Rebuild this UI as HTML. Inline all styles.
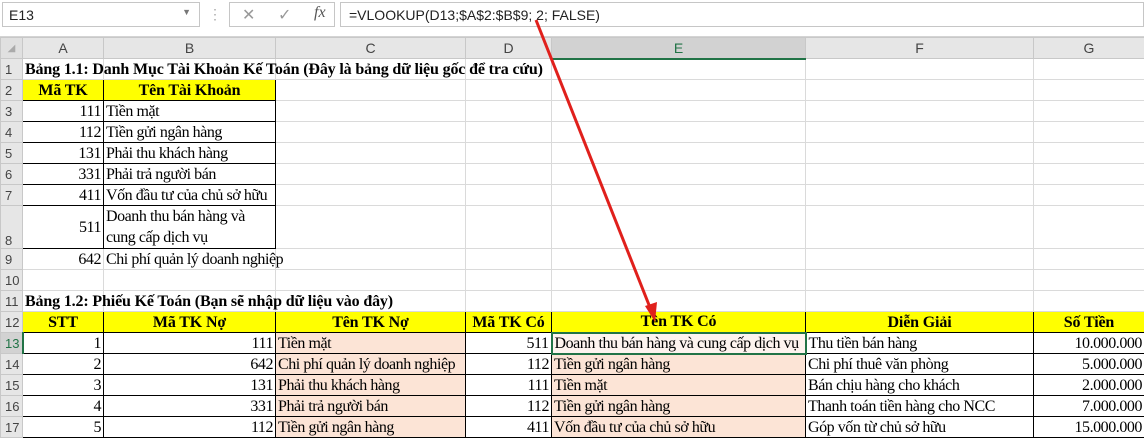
<!DOCTYPE html>
<html><head><meta charset="utf-8"><style>
*{margin:0;padding:0;box-sizing:border-box}
body{width:1144px;height:436px;overflow:hidden;background:#fff;position:relative;font-family:"Liberation Serif",serif}
.fb{position:absolute;left:0;top:0;width:1144px;height:37px;background:#fff;border-bottom:1px solid #d4d4d4}
.nb{position:absolute;left:2px;top:2px;width:198px;height:25px;background:#fff;border:1px solid #c6c6c6;font:14px "Liberation Sans",sans-serif;color:#222;padding:4px 6px}
.nb span{position:absolute;right:8px;top:4px;font-size:9px;color:#777}
.dots{position:absolute;left:208px;top:6px;color:#aaa;font:14px "Liberation Sans",sans-serif}
.ic{position:absolute;left:229px;top:2px;width:106px;height:25px;background:#fff;border:1px solid #c6c6c6;font:16px "Liberation Sans",sans-serif;color:#999}
.fx{position:absolute;left:340px;top:2px;width:804px;height:25px;background:#fff;border:1px solid #c6c6c6;font:14px "Liberation Sans",sans-serif;color:#222;padding:4px 8px}
table{position:absolute;left:0;top:37px;width:1144px;border-collapse:collapse;table-layout:fixed}
td{border:1px solid #dadada;height:21px;font-size:16px;letter-spacing:-0.45px;white-space:nowrap;overflow:visible;padding:0 2px;line-height:19px;color:#000}
td.h{background:#e6e6e6;font:14px "Liberation Sans",sans-serif;letter-spacing:0;color:#444;text-align:center;border-color:#c8c8c8}
td.rh{text-align:left;padding-left:4px;font-size:13px}
td.sel{background:#d2d2d2;color:#217346}
td.b{border:1px solid #000}
.y{background:#ffff00;font-weight:bold;text-align:center;letter-spacing:-0.15px}
.r{text-align:right}
.p{background:#fce4d6}
.t{font-weight:bold;letter-spacing:-0.15px}
</style></head><body>
<div class="fb">
<div class="nb">E13<span>▼</span></div>
<div class="dots">⋮</div>
<div class="ic"><span style="position:absolute;left:12px;top:2px">✕</span><span style="position:absolute;left:48px;top:2px">✓</span><span style="position:absolute;left:84px;top:1px;font-family:'Liberation Serif';font-style:italic;color:#555">fx</span></div>
<div class="fx">=VLOOKUP(D13;$A$2:$B$9; 2; FALSE)</div>
</div>
<table>
<colgroup><col style="width:22px"><col style="width:81px"><col style="width:172px"><col style="width:190px"><col style="width:86px"><col style="width:254px"><col style="width:228px"><col style="width:111px"></colgroup>
<tr><td class="h" style="background:#e0e0e0;font-size:10px;color:#aaa">◢</td><td class="h">A</td><td class="h">B</td><td class="h">C</td><td class="h">D</td><td class="h sel" style="border-bottom:2px solid #217346">E</td><td class="h">F</td><td class="h">G</td></tr>
<tr><td class="h rh">1</td><td class="t">Bảng 1.1: Danh Mục Tài Khoản Kế Toán (Đây là bảng dữ liệu gốc để tra cứu)</td><td style="border-left-color:transparent"></td><td style="border-left-color:transparent"></td><td style="border-left-color:transparent"></td><td></td><td></td><td></td></tr>
<tr><td class="h rh">2</td><td class="b y">Mã TK</td><td class="b y">Tên Tài Khoản</td><td></td><td></td><td></td><td></td><td></td></tr>
<tr><td class="h rh">3</td><td class="b r">111</td><td class="b">Tiền mặt</td><td></td><td></td><td></td><td></td><td></td></tr>
<tr><td class="h rh">4</td><td class="b r">112</td><td class="b">Tiền gửi ngân hàng</td><td></td><td></td><td></td><td></td><td></td></tr>
<tr><td class="h rh">5</td><td class="b r">131</td><td class="b">Phải thu khách hàng</td><td></td><td></td><td></td><td></td><td></td></tr>
<tr><td class="h rh">6</td><td class="b r">331</td><td class="b">Phải trả người bán</td><td></td><td></td><td></td><td></td><td></td></tr>
<tr><td class="h rh">7</td><td class="b r">411</td><td class="b">Vốn đầu tư của chủ sở hữu</td><td></td><td></td><td></td><td></td><td></td></tr>
<tr style="height:42px"><td class="h rh" style="vertical-align:bottom">8</td><td class="b r">511</td><td class="b" style="white-space:normal;line-height:21px">Doanh thu bán hàng và cung cấp dịch vụ</td><td></td><td></td><td></td><td></td><td></td></tr>
<tr><td class="h rh">9</td><td class="r">642</td><td>Chi phí quản lý doanh nghiệp</td><td></td><td></td><td></td><td></td><td></td></tr>
<tr><td class="h rh">10</td><td></td><td></td><td></td><td></td><td></td><td></td><td></td></tr>
<tr><td class="h rh">11</td><td class="t">Bảng 1.2: Phiếu Kế Toán (Bạn sẽ nhập dữ liệu vào đây)</td><td style="border-left-color:transparent"></td><td style="border-left-color:transparent"></td><td></td><td></td><td></td><td></td></tr>
<tr><td class="h rh">12</td><td class="b y">STT</td><td class="b y">Mã TK Nợ</td><td class="b y">Tên TK Nợ</td><td class="b y">Mã TK Có</td><td class="b y">Tên TK Có</td><td class="b y">Diễn Giải</td><td class="b y">Số Tiền</td></tr>
<tr><td class="h rh sel" style="border-right:2px solid #217346">13</td><td class="b r">1</td><td class="b r">111</td><td class="b p">Tiền mặt</td><td class="b r">511</td><td class="b" style="border:2px solid #217346;background:#fdf3ee">Doanh thu bán hàng và cung cấp dịch vụ</td><td class="b">Thu tiền bán hàng</td><td class="b r">10.000.000</td></tr>
<tr><td class="h rh">14</td><td class="b r">2</td><td class="b r">642</td><td class="b p">Chi phí quản lý doanh nghiệp</td><td class="b r">112</td><td class="b p">Tiền gửi ngân hàng</td><td class="b">Chi phí thuê văn phòng</td><td class="b r">5.000.000</td></tr>
<tr><td class="h rh">15</td><td class="b r">3</td><td class="b r">131</td><td class="b p">Phải thu khách hàng</td><td class="b r">111</td><td class="b p">Tiền mặt</td><td class="b">Bán chịu hàng cho khách</td><td class="b r">2.000.000</td></tr>
<tr><td class="h rh">16</td><td class="b r">4</td><td class="b r">331</td><td class="b p">Phải trả người bán</td><td class="b r">112</td><td class="b p">Tiền gửi ngân hàng</td><td class="b">Thanh toán tiền hàng cho NCC</td><td class="b r">7.000.000</td></tr>
<tr><td class="h rh">17</td><td class="b r">5</td><td class="b r">112</td><td class="b p">Tiền gửi ngân hàng</td><td class="b r">411</td><td class="b p">Vốn đầu tư của chủ sở hữu</td><td class="b">Góp vốn từ chủ sở hữu</td><td class="b r">15.000.000</td></tr>
</table>
<svg style="position:absolute;left:0;top:0" width="1144" height="436"><line x1="536" y1="20" x2="651" y2="310" stroke="#e0201c" stroke-width="3"/><polygon points="655,322 645,306 657,302" fill="#e0201c"/></svg>
</body></html>
